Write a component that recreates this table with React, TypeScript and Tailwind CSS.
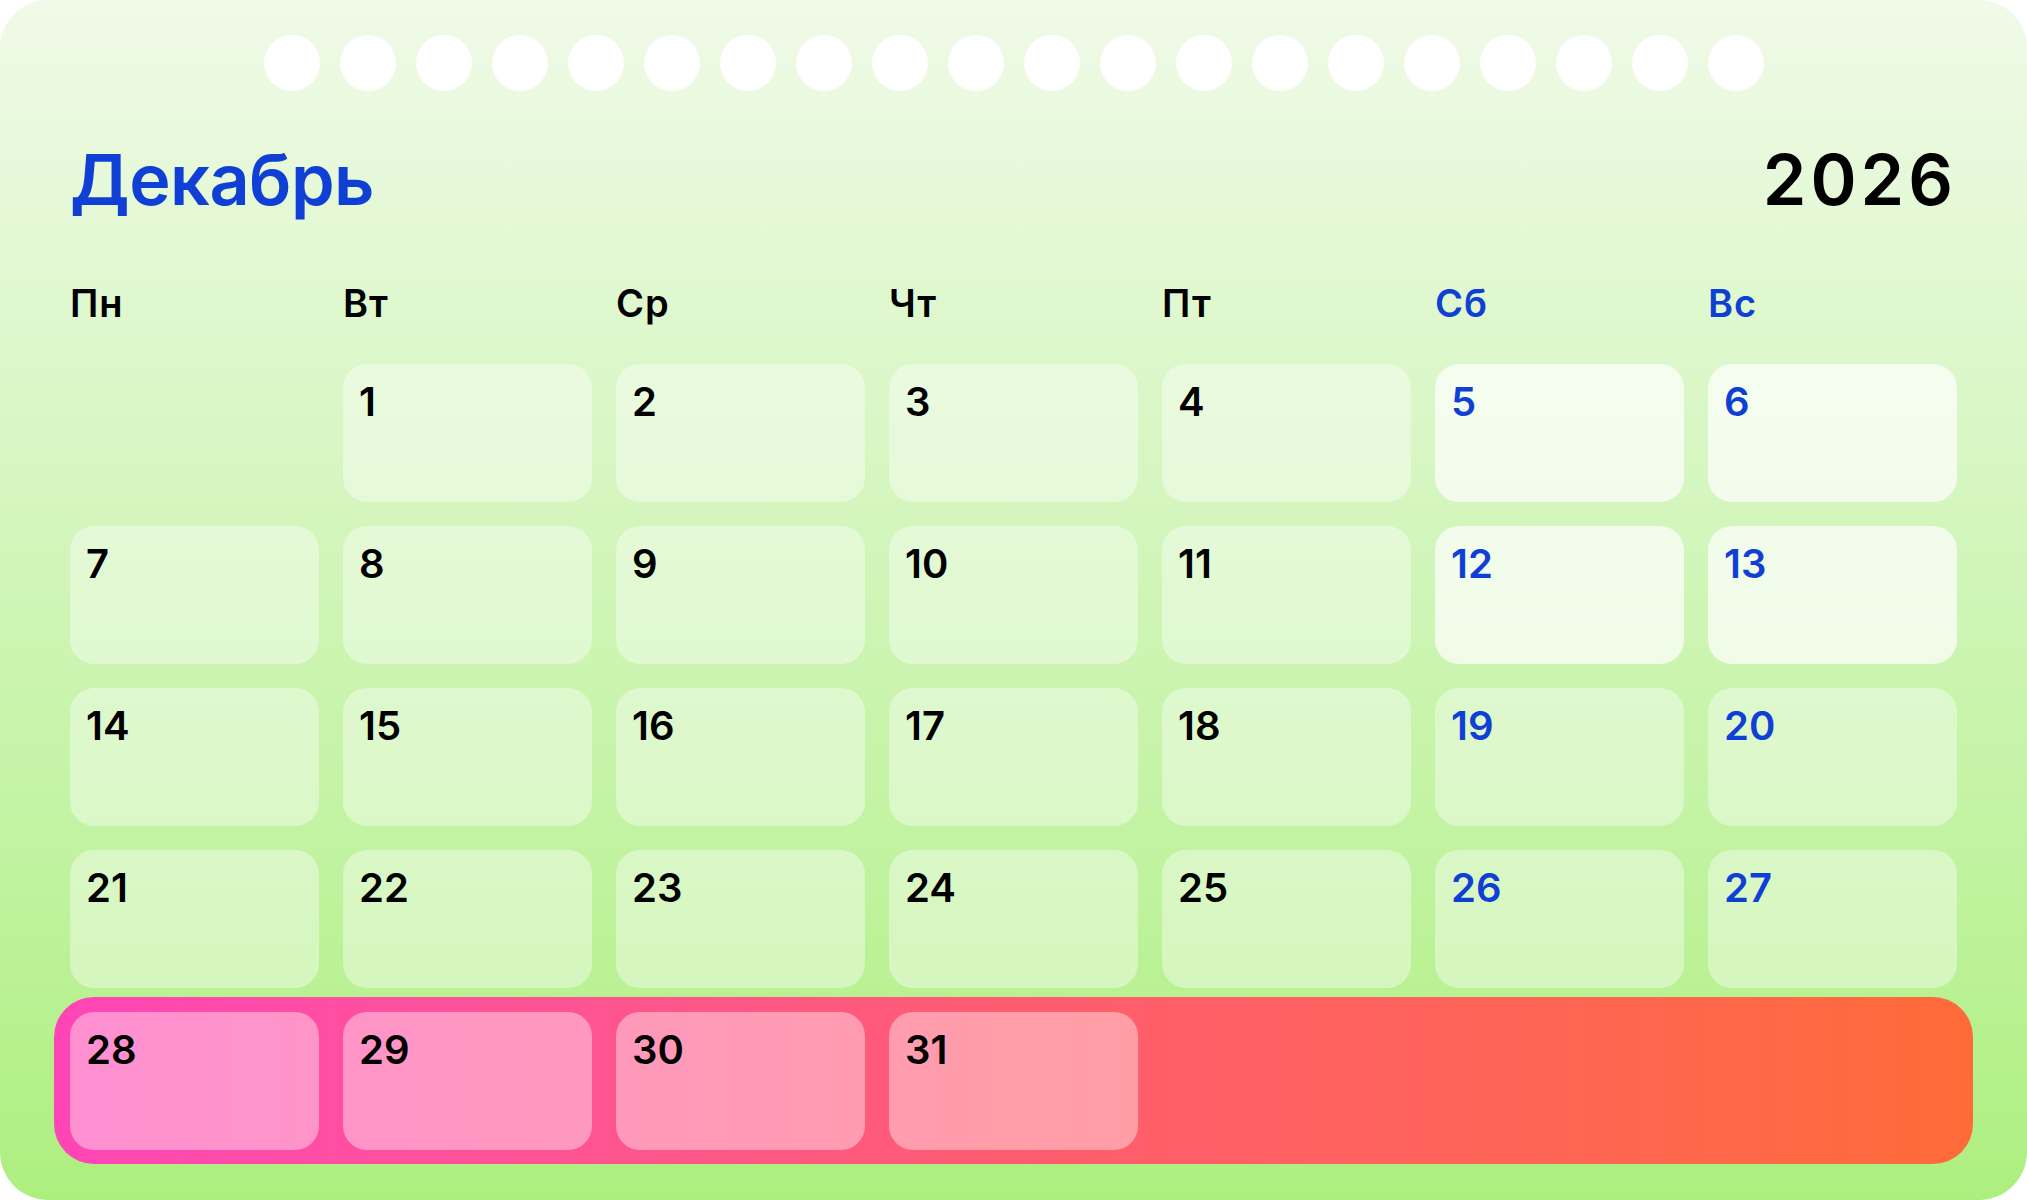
const WEEKDAYS = ["Пн", "Вт", "Ср", "Чт", "Пт", "Сб", "Вс"];

// December 2026 starts on Tuesday
const weeks: (number | null)[][] = [
  [null, 1, 2, 3, 4, 5, 6],
  [7, 8, 9, 10, 11, 12, 13],
  [14, 15, 16, 17, 18, 19, 20],
  [21, 22, 23, 24, 25, 26, 27],
];
const lastWeek = [28, 29, 30, 31];

const font = { fontFamily: "Inter, 'Noto Sans', sans-serif" };

function DayCell({ day, col, row }: { day: number | null; col: number; row: number }) {
  if (day === null) return <div className="h-[138px]" />;
  const weekend = col >= 5;
  const bright = weekend && row < 2;
  return (
    <div
      className={
        "h-[138px] rounded-[24px] pl-[16px] pt-[18px] " +
        (bright ? "bg-white/70" : "bg-white/40")
      }
    >
      <span
        className={
          "block text-[40px] font-semibold leading-none " +
          (weekend ? "text-[#0f3fd4]" : "text-black")
        }
      >
        {day}
      </span>
    </div>
  );
}

export default function App() {
  return (
    <div className="h-[1200px] w-[2027px] bg-white" style={font}>
      <div className="flex h-full flex-col rounded-[48px] bg-gradient-to-b from-[#f0fae8] to-[#adef7f]">
        <div className="flex justify-center gap-[20px] pt-[35px]">
          {Array.from({ length: 20 }, (_, i) => (
            <div key={i} className="h-[56px] w-[56px] rounded-full bg-white" />
          ))}
        </div>

        <div className="mt-[54px] flex items-baseline justify-between px-[70px]">
          <h1 className="text-[70px] font-semibold leading-none tracking-[-0.5px] text-[#0f3fd4]">
            Декабрь
          </h1>
          <span className="text-[70px] font-semibold leading-none tracking-[4px] text-black">
            2026
          </span>
        </div>

        <div className="mt-[69px] grid grid-cols-7 gap-x-[24px] px-[70px]">
          {WEEKDAYS.map((d, i) => (
            <div
              key={d}
              className={
                "text-[38px] font-semibold leading-none tracking-[1px] " +
                (i >= 5 ? "text-[#0f3fd4]" : "text-black")
              }
            >
              {d}
            </div>
          ))}
        </div>

        <div className="mt-[42px] grid grid-cols-7 gap-[24px] px-[70px]">
          {weeks.map((week, r) =>
            week.map((day, c) => <DayCell key={`${r}-${c}`} day={day} col={c} row={r} />),
          )}
        </div>

        <div className="mx-[54px] mt-[9px] grid grid-cols-7 gap-x-[24px] rounded-[40px] bg-gradient-to-r from-[#ff45b6] via-[#ff5c70] to-[#ff6b37] px-[16px] pb-[14px] pt-[15px]">
          {lastWeek.map((day) => (
            <div key={day} className="h-[138px] rounded-[24px] bg-white/40 pl-[16px] pt-[18px]">
              <span className="block text-[40px] font-semibold leading-none text-black">
                {day}
              </span>
            </div>
          ))}
        </div>
      </div>
    </div>
  );
}
